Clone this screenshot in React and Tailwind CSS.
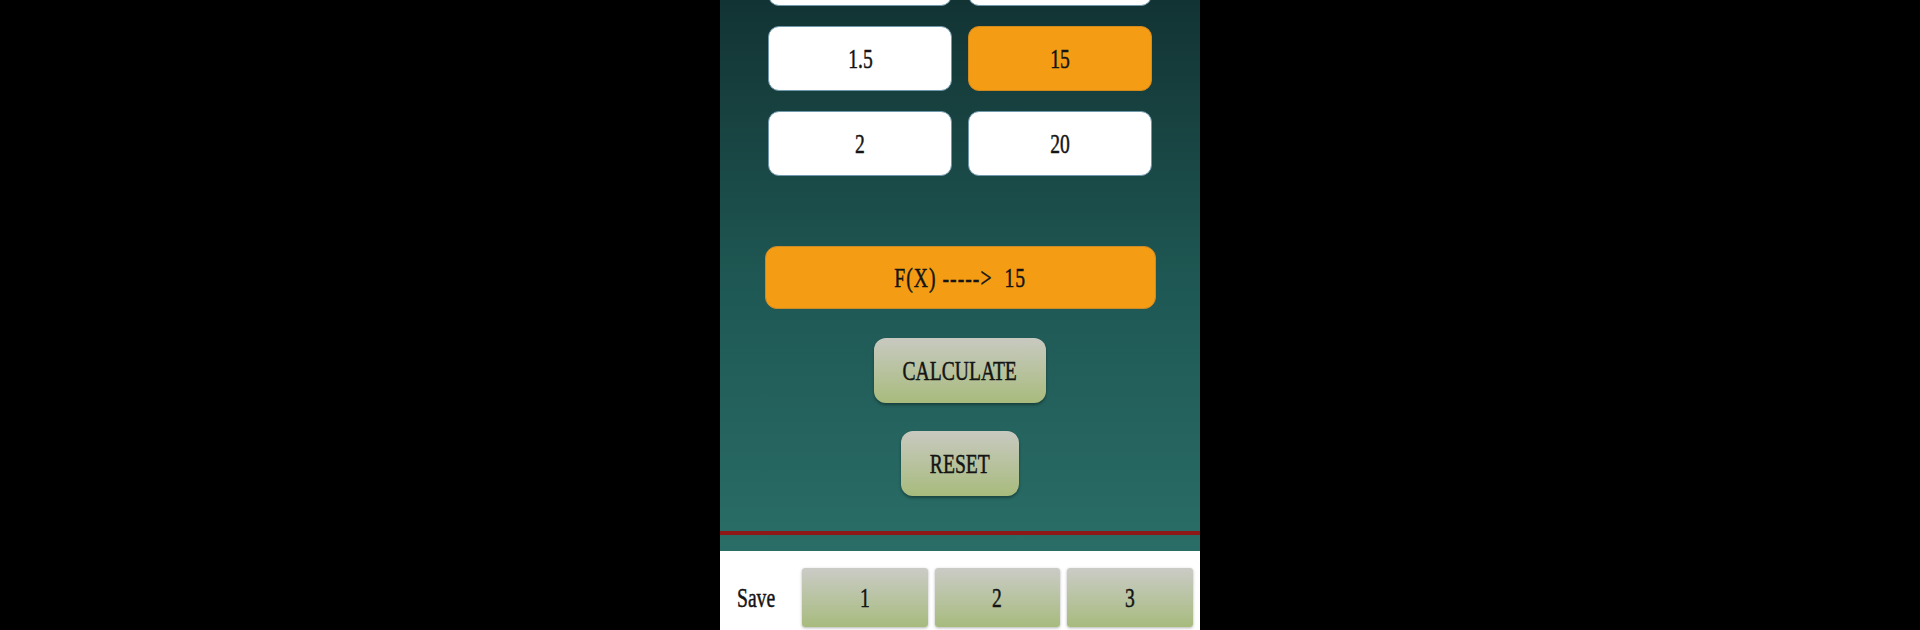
import React from "react";

const font = { fontFamily: '"Liberation Serif", "Times New Roman", serif' };

function T({ children, className = "" }) {
  return (
    <span
      className={
        "inline-block scale-x-[0.7] whitespace-nowrap font-normal text-[28px] leading-none text-[#141414] [-webkit-text-stroke:0.5px_#141414] " +
        className
      }
      style={font}
    >
      {children}
    </span>
  );
}

function Cell({ children, active }) {
  return (
    <div
      className={
        "h-[65px] rounded-[11px] border flex items-center justify-center " +
        (active ? "bg-[#f39c14] border-[#d38a1c]" : "bg-white border-[#6f98ad]")
      }
    >
      {children ? <T>{children}</T> : null}
    </div>
  );
}

export default function App() {
  const rows = [
    ["", ""],
    ["1.5", "15"],
    ["2", "20"],
  ];
  return (
    <div className="w-full h-[630px] bg-black flex justify-center overflow-hidden">
      <div className="w-[480px] h-[630px] flex flex-col overflow-hidden">
        <div className="h-[551px] shrink-0 flex flex-col items-center bg-gradient-to-b from-[#123333] via-[#1e5753] to-[#2a6d67]">
          <div className="-mt-[59px] w-full px-[48px] grid grid-cols-2 gap-x-[16px] gap-y-[20px]">
            {rows.map(([a, b], i) => (
              <React.Fragment key={i}>
                <Cell>{a}</Cell>
                <Cell active={b === "15"}>{b}</Cell>
              </React.Fragment>
            ))}
          </div>
          <div className="mt-[70px] w-[391px] h-[63px] rounded-[12px] bg-[#f39c14] border border-[#c98a2a] flex items-center justify-center">
            <T className="tracking-[1.5px]">F(X) -----&gt;&nbsp; 15</T>
          </div>
          <div className="mt-[29px] w-[172px] h-[65px] rounded-[12px] bg-gradient-to-b from-[#c8c9c0] to-[#a8bb7c] shadow-[0_2px_3px_rgba(0,0,0,0.35)] flex items-center justify-center">
            <T>CALCULATE</T>
          </div>
          <div className="mt-[28px] w-[118px] h-[65px] rounded-[12px] bg-gradient-to-b from-[#c8c9c0] to-[#a8bb7c] shadow-[0_2px_3px_rgba(0,0,0,0.35)] flex items-center justify-center">
            <T>RESET</T>
          </div>
          <div className="mt-[35px] w-full h-[4px] bg-[#8e1717]" />
        </div>
        <div className="flex-1 bg-white flex items-start pt-[17px] pr-[7px]">
          <div className="w-[82px] h-[59px] flex items-center justify-start pl-[17px]">
            <T className="origin-left">Save</T>
          </div>
          <div className="flex-1 grid grid-cols-3 gap-[7px]">
            {["1", "2", "3"].map((n) => (
              <div
                key={n}
                className="h-[59px] rounded-[3px] bg-gradient-to-b from-[#cbcbc6] to-[#a7bb7d] shadow-[0_1px_3px_rgba(0,0,0,0.3)] flex items-center justify-center"
              >
                <T>{n}</T>
              </div>
            ))}
          </div>
        </div>
      </div>
    </div>
  );
}
